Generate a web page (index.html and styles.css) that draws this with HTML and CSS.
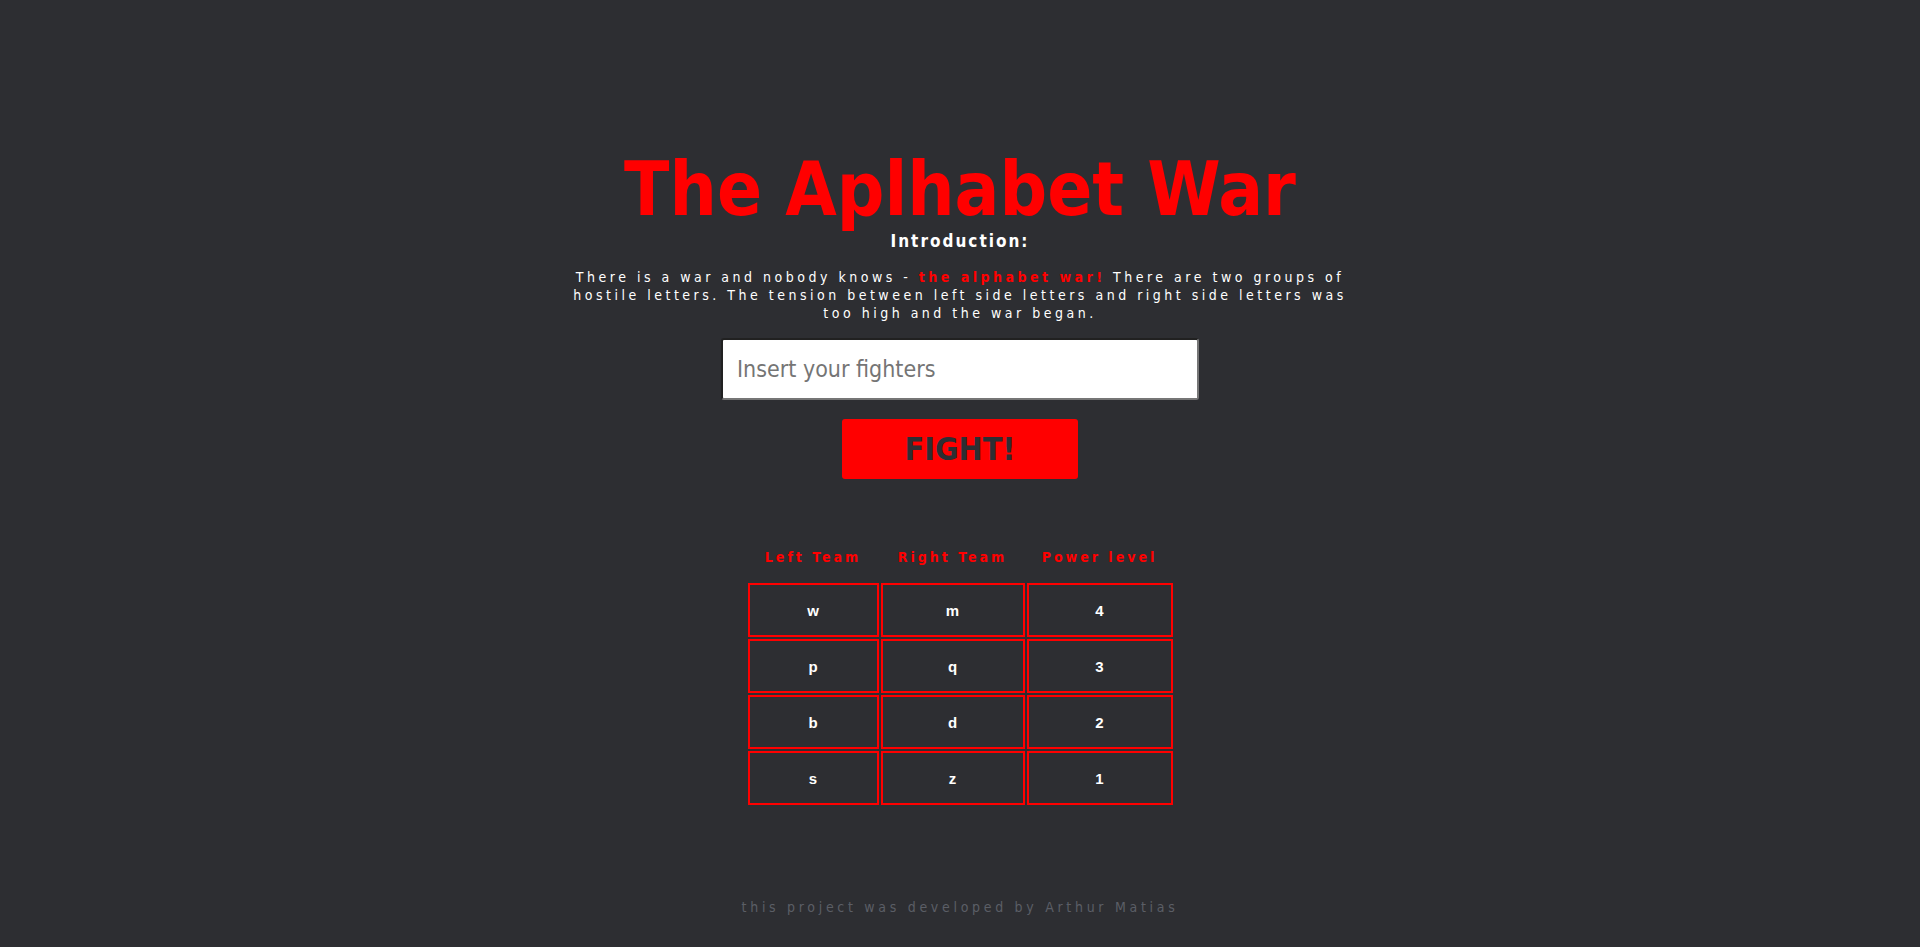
FILE: index.html
```html
<!DOCTYPE html>
<html lang="en">
<head>
<meta charset="utf-8">
<title>The Aplhabet War</title>
<link rel="stylesheet" href="styles.css">
</head>
<body>
<main class="page">
  <h1 class="title">The Aplhabet War</h1>
  <h2 class="intro-heading">Introduction:</h2>
  <p class="intro">There is a war and nobody knows - <span class="accent">the alphabet war!</span> There are two groups of hostile letters. The tension between left side letters and right side letters was too high and the war began.</p>
  <input class="fighters" type="text" placeholder="Insert your fighters">
  <button class="fight">FIGHT!</button>
  <table class="board">
    <thead>
      <tr>
        <th class="c1">Left Team</th>
        <th class="c2">Right Team</th>
        <th class="c3">Power level</th>
      </tr>
    </thead>
    <tbody>
      <tr><td>w</td><td>m</td><td>4</td></tr>
      <tr><td>p</td><td>q</td><td>3</td></tr>
      <tr><td>b</td><td>d</td><td>2</td></tr>
      <tr><td>s</td><td>z</td><td>1</td></tr>
    </tbody>
  </table>
  <footer class="credit">this project was developed by Arthur Matias</footer>
</main>
</body>
</html>
```
FILE: styles.css
```css
html, body {
  margin: 0;
  padding: 0;
  background: #2d2e32;
}
body {
  font-family: "DejaVu Sans Condensed", "Liberation Sans", sans-serif;
  color: #ffffff;
}
.page {
  display: flex;
  flex-direction: column;
  align-items: center;
  padding-top: 150px;
  min-height: 947px;
  box-sizing: border-box;
}
.title {
  margin: 0;
  font-size: 74px;
  line-height: 79px;
  font-weight: bold;
  color: #ff0000;
  letter-spacing: 0;
}
.intro-heading {
  margin: 2px 0 0;
  font-size: 17px;
  line-height: 20px;
  font-weight: bold;
  letter-spacing: 2px;
  color: #ffffff;
}
.intro {
  margin: 17px 0 0;
  width: 800px;
  text-align: center;
  font-size: 14px;
  line-height: 18px;
  letter-spacing: 3.5px;
  color: #ffffff;
}
.accent {
  color: #ff0000;
  font-weight: bold;
}
.fighters {
  margin-top: 16px;
  width: 478px;
  height: 62px;
  box-sizing: border-box;
  border: 2px inset #767676;
  border-radius: 3px;
  background: #ffffff;
  padding: 0 14px;
  font-family: "DejaVu Sans Condensed", sans-serif;
  font-size: 23px;
  color: #222;
  outline: none;
}
.fighters::placeholder {
  color: #757575;
}
.fight {
  margin-top: 19px;
  width: 236px;
  height: 60px;
  border: none;
  border-radius: 3px;
  background: #ff0000;
  color: #2d2e33;
  font-family: "DejaVu Sans Condensed", sans-serif;
  font-size: 32px;
  font-weight: bold;
  cursor: pointer;
}
.board {
  margin-top: 58px;
  border-collapse: separate;
  border-spacing: 2px;
}
.board th {
  height: 36px;
  padding: 0 0 6px;
  color: #ff0000;
  font-size: 14px;
  font-weight: bold;
  letter-spacing: 3px;
  text-align: center;
}
.board .c1 { width: 131px; }
.board .c2 { width: 144px; }
.board .c3 { width: 146px; }
.board td {
  box-sizing: border-box;
  height: 54px;
  border: 2px solid #ff0000;
  text-align: center;
  font-size: 15px;
  font-weight: bold;
  color: #ffffff;
  font-family: "Liberation Sans", sans-serif;
}
.credit {
  margin-top: 90px;
  font-size: 14px;
  line-height: 20px;
  letter-spacing: 3.7px;
  color: #5b5e66;
}
```
